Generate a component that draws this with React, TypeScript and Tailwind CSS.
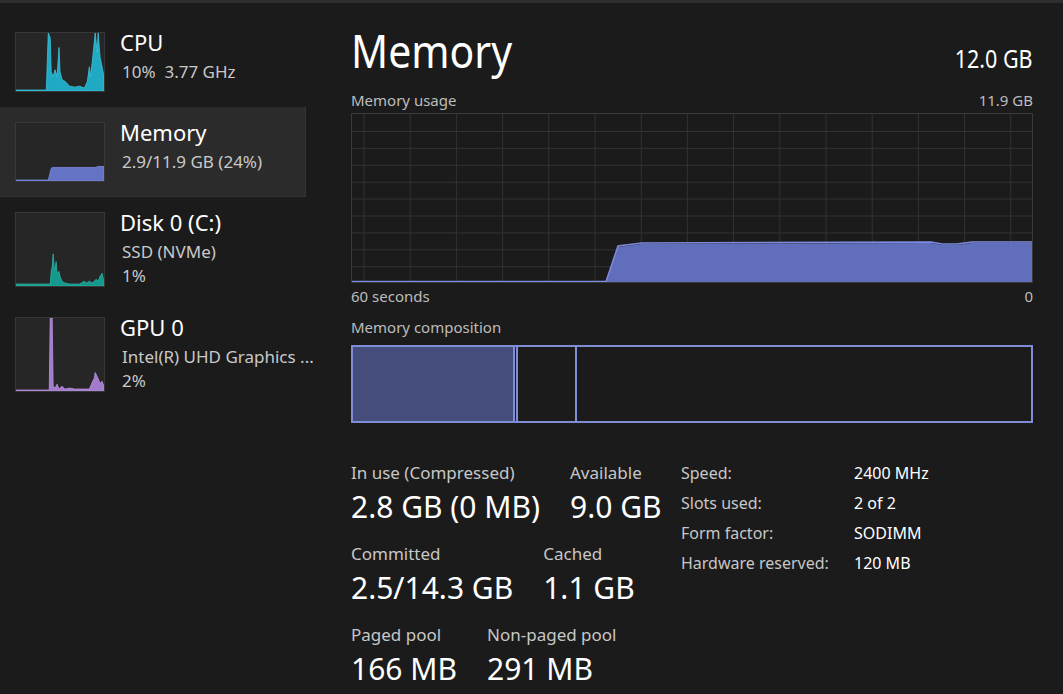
import React from 'react';

type Spark = {
  points: string;
  fill: string;
  stroke: string;
  h: number;
};

const cpuPts =
  '0,59 31,59 32,30 33,0 35,5 36,40 38,45 40,38 42,45 44,15 45,40 47,48 50,50 52,52 55,55 60,56 65,55 70,57 73,50 75,35 76,45 78,30 80,10 81,0 83,20 84,0 86,25 88,35 90,45 90,60 0,60';
const memPts = '0,59 33,59 36,47 37,46 82,46 83,45 90,45 90,60 0,60';
const diskPts =
  '0,73 35,73 36,60 37,55 38,42 39,55 40,58 41,50 42,62 44,60 45,65 47,70 50,72 55,73 65,73 70,70 72,72 75,70 78,72 82,68 84,70 86,65 88,62 90,70 90,75 0,75';
const gpuPts =
  '0,74 34,74 35,0 37,0 38,70 40,72 42,68 44,73 47,70 50,73 55,72 60,73 75,73 78,66 80,62 81,56 83,60 86,67 88,65 90,70 90,75 0,75';

const Thumb: React.FC<{ spark: Spark }> = ({ spark }) => (
  <div className="shrink-0 w-[90px] bg-[#262626] border border-[#383838]" style={{ height: spark.h }}>
    <svg width="88" height={spark.h - 2} viewBox={`0 0 90 ${spark.h}`} preserveAspectRatio="none" className="block">
      <polygon points={spark.points} fill={spark.fill} stroke={spark.stroke} strokeWidth="0.8" />
    </svg>
  </div>
);

interface RowProps {
  title: string;
  lines: string[];
  spark: Spark;
  selected?: boolean;
  height: number;
}

const SideRow: React.FC<RowProps> = ({ title, lines, spark, selected, height }) => (
  <div
    className={`flex px-[15px] pt-[15px] ${selected ? 'bg-[#2b2b2b] border-r border-b border-[#333333]' : ''}`}
    style={{ height }}
  >
    <Thumb spark={spark} />
    <div className="ml-[15px] -mt-[5px] min-w-0">
      <div className="text-[22px] leading-[30px] text-white">{title}</div>
      <div className="mt-[3px] pl-[2px]">
        {lines.map((l) => (
          <div key={l} className="text-[17px] leading-[24px] text-[#c9c9c9] whitespace-pre">
            {l}
          </div>
        ))}
      </div>
    </div>
  </div>
);

const Stat: React.FC<{ label: string; value: string }> = ({ label, value }) => (
  <div className="flex flex-col">
    <span className="text-[17px] leading-[22px] text-[#c7c7c7] whitespace-nowrap">{label}</span>
    <span className="mt-[4px] text-[30px] leading-[38px] text-white whitespace-nowrap">{value}</span>
  </div>
);

const UsageGraph: React.FC = () => {
  const vLines = Array.from({ length: 15 }, (_, i) => 12 + i * 46.2);
  const hLines = Array.from({ length: 9 }, (_, i) => 17.5 + i * 16.9);
  const fillPts =
    '0,168 254,168 266,133 290,130 579,129 590,131 605,131 620,129 681,129 681,169 0,169';
  return (
    <div className="mt-[3px] h-[170px] border border-[#3a3a3a] bg-[#1b1b1b]">
      <svg width="680" height="168" viewBox="0 0 680 168" className="block">
        {vLines.map((x) => (
          <line key={x} x1={x} y1="0" x2={x} y2="168" stroke="#333333" strokeWidth="1" />
        ))}
        {hLines.map((y) => (
          <line key={y} x1="0" y1={y} x2="680" y2={y} stroke="#333333" strokeWidth="1" />
        ))}
        <polygon points={fillPts} fill="#6573c4" fillOpacity="0.95" />
        <polyline
          points="0,167.5 254,167.5 266,132 290,129 579,128 590,130 605,130 620,128 681,128"
          fill="none"
          stroke="#7d8ce0"
          strokeWidth="1.5"
        />
      </svg>
    </div>
  );
};

const Composition: React.FC = () => (
  <div className="mt-[8px] h-[78px] border-2 border-[#7f8dd6] flex">
    <div className="w-[162px] bg-[#454d7d] border-r-2 border-[#7f8dd6]" />
    <div className="w-[1px]" />
    <div className="w-[61px] border-l-2 border-r-2 border-[#7f8dd6]" />
    <div className="flex-1" />
  </div>
);

const specs: [string, string][] = [
  ['Speed:', '2400 MHz'],
  ['Slots used:', '2 of 2'],
  ['Form factor:', 'SODIMM'],
  ['Hardware reserved:', '120 MB'],
];

export default function App() {
  return (
    <div className="w-[1063px] h-[694px] overflow-hidden bg-[#1b1b1b] border-t-[3px] border-[#2f2f2f] flex font-['Noto_Sans',sans-serif]">
      {/* Sidebar */}
      <div className="w-[306px] shrink-0 pt-[14px] flex flex-col">
        <SideRow
          title="CPU"
          lines={['10%  3.77 GHz']}
          height={90}
          spark={{ points: cpuPts, fill: '#1fa9c4', stroke: '#3cc6e0', h: 60 }}
        />
        <SideRow
          title="Memory"
          lines={['2.9/11.9 GB (24%)']}
          height={90}
          selected
          spark={{ points: memPts, fill: '#6573c4', stroke: '#7d8ce0', h: 60 }}
        />
        <SideRow
          title="Disk 0 (C:)"
          lines={['SSD (NVMe)', '1%']}
          height={105}
          spark={{ points: diskPts, fill: '#16998d', stroke: '#2ab3a5', h: 75 }}
        />
        <SideRow
          title="GPU 0"
          lines={['Intel(R) UHD Graphics ...', '2%']}
          height={105}
          spark={{ points: gpuPts, fill: '#a27ccb', stroke: '#b994e0', h: 75 }}
        />
      </div>

      {/* Main */}
      <div className="flex-1 pl-[45px] pr-[31px] pt-[19px] flex flex-col">
        <div className="flex justify-between items-baseline">
          <span className="text-[46px] leading-[56px] text-white inline-block origin-left scale-x-[0.89]">Memory</span>
          <span className="text-[25px] leading-[32px] text-white inline-block origin-right scale-x-[0.86]">12.0 GB</span>
        </div>

        <div className="mt-[12px] flex justify-between text-[15px] leading-[20px] text-[#bdbdbd]">
          <span>Memory usage</span>
          <span>11.9 GB</span>
        </div>
        <UsageGraph />
        <div className="mt-[3px] flex justify-between text-[15px] leading-[20px] text-[#bdbdbd]">
          <span>60 seconds</span>
          <span>0</span>
        </div>

        <div className="mt-[11px] text-[15px] leading-[20px] text-[#bdbdbd]">Memory composition</div>
        <Composition />

        <div className="mt-[39px] flex">
          <div className="w-[330px] shrink-0 flex flex-col">
            <div className="flex gap-[30px]">
              <Stat label="In use (Compressed)" value="2.8 GB (0 MB)" />
              <Stat label="Available" value="9.0 GB" />
            </div>
            <div className="mt-[17px] flex gap-[30px]">
              <Stat label="Committed" value="2.5/14.3 GB" />
              <Stat label="Cached" value="1.1 GB" />
            </div>
            <div className="mt-[17px] flex gap-[30px]">
              <Stat label="Paged pool" value="166 MB" />
              <Stat label="Non-paged pool" value="291 MB" />
            </div>
          </div>
          <div className="-mt-[4px] flex flex-col">
            {specs.map(([k, v]) => (
              <div key={k} className="flex text-[16px] leading-[30px]">
                <span className="w-[173px] text-[#c7c7c7]">{k}</span>
                <span className="text-white">{v}</span>
              </div>
            ))}
          </div>
        </div>
      </div>
    </div>
  );
}
